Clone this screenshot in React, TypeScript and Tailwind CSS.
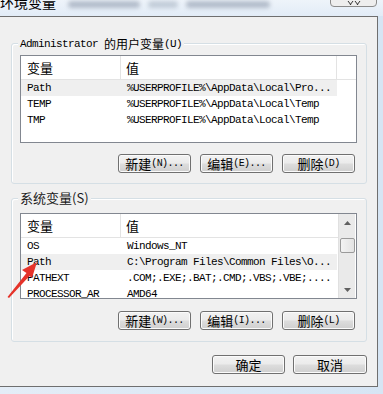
import React from "react";

const mono = "font-['NSimSun','Liberation_Mono','Noto_Sans_CJK_SC',monospace] text-[11px] tracking-[-0.6px] leading-[16px] text-black";
const cjk = "font-['Noto_Sans_CJK_SC','Microsoft_YaHei',sans-serif]";

function Btn({ label, w = "w-[73px]" }: { label: React.ReactNode; w?: string }) {
  return (
    <div
      className={`${w} h-[19px] rounded-[3px] border border-[#707070] bg-[linear-gradient(to_bottom,#f2f2f2_0%,#ebebeb_48%,#dddddd_52%,#cfcfcf_100%)] shadow-[inset_0_0_0_1px_#fbfbfb] flex items-center justify-center text-black`}
    >
      {label}
    </div>
  );
}

function BtnLabel({ cn, hk }: { cn: string; hk: string }) {
  return (
    <span className="flex items-center">
      <span className={`${cjk} text-[13px] leading-[16px]`}>{cn}</span>
      <span className={`font-['Liberation_Mono',monospace] text-[10px] tracking-[-0.6px] leading-[16px]`}>{hk}</span>
    </span>
  );
}

type Row = { k: string; v: string; sel?: boolean };

function Header({ right }: { right: boolean }) {
  return (
    <div className="flex h-[24px] border-b border-[#e3e3e3] shrink-0">
      <div className={`w-[100px] border-r border-[#e3e3e3] pl-[6px] flex items-center ${cjk} text-[13px]`}>变量</div>
      <div className={`w-[216px] ${right ? "border-r border-[#e3e3e3]" : ""} pl-[5px] flex items-center ${cjk} text-[13px]`}>值</div>
    </div>
  );
}

function Rows({ rows }: { rows: Row[] }) {
  return (
    <>
      {rows.map((r) => (
        <div key={r.k} className={`flex h-[16px] shrink-0 w-[316px] ${r.sel ? "bg-[#efefef]" : ""}`}>
          <div className={`w-[100px] pl-[6px] whitespace-nowrap overflow-hidden ${mono}`}>{r.k}</div>
          <div className={`w-[216px] pl-[6px] whitespace-nowrap overflow-hidden ${mono}`}>{r.v}</div>
        </div>
      ))}
    </>
  );
}

export default function App() {
  const userRows: Row[] = [
    { k: "Path", v: "%USERPROFILE%\\AppData\\Local\\Pro...", sel: true },
    { k: "TEMP", v: "%USERPROFILE%\\AppData\\Local\\Temp" },
    { k: "TMP", v: "%USERPROFILE%\\AppData\\Local\\Temp" },
  ];
  const sysRows: Row[] = [
    { k: "OS", v: "Windows_NT" },
    { k: "Path", v: "C:\\Program Files\\Common Files\\O...", sel: true },
    { k: "PATHEXT", v: ".COM;.EXE;.BAT;.CMD;.VBS;.VBE;...." },
    { k: "PROCESSOR_AR", v: "AMD64" },
  ];

  return (
    <div className="relative w-[383px] h-[394px] overflow-hidden bg-[linear-gradient(to_right,#e4edf7,#d6e5f4)]">
      {/* title bar */}
      <div className="h-[16px] flex items-start overflow-hidden bg-[linear-gradient(to_bottom,#eef4fa,#e2ecf7)]">
        <div className={`${cjk} text-[14px] leading-[14px] mt-[-5px] text-black whitespace-nowrap`}>环境变量</div>
        <div className="ml-[12px] mt-[1px] flex gap-[8px] blur-[2px]">
          <div className="w-[72px] h-[7px] bg-[#8e9aab] rounded-full opacity-60" />
          <div className="w-[30px] h-[7px] bg-[#9aa7b8] rounded-full opacity-50" />
          <div className="w-[84px] h-[7px] bg-[#8e9aab] rounded-full opacity-60" />
        </div>
        <div className="ml-auto mr-[6px] w-[47px] h-[8px] mt-[-1px] rounded-b-[4px] border border-[#8b8b8b] bg-[#eeeeee] flex justify-center items-end">
          <svg width="14" height="5" viewBox="0 0 14 5">
            <path d="M1 0 L4 4 M6 0 L3 4 M8 0 L11 4 M13 0 L10 4" stroke="#333" strokeWidth="1" fill="none" />
          </svg>
        </div>
      </div>

      {/* dialog body */}
      <div className="w-[378px] h-[371px] border-t border-r border-b border-[#6f6f6f] bg-[#f0f0f0] pl-[11px] pr-[10px] flex flex-col">
        {/* user vars group */}
        <div className="relative mt-[26px] h-[141px] rounded-[3px] border border-[#d5dfe5] shadow-[inset_1px_1px_0_#fff] pt-[11px] pl-[8px] pr-[9px] flex flex-col shrink-0">
          <div className={`absolute -top-[8px] left-[6px] px-[2px] bg-[#f0f0f0] flex items-center whitespace-pre ${mono} leading-[14px]`}>
            <span>Administrator </span>
            <span className={`${cjk} text-[12px] tracking-normal`}>的用户变量</span>
            <span>(U)</span>
          </div>
          <div className="h-[88px] border border-[#828790] bg-white flex flex-col overflow-hidden shrink-0">
            <Header right />
            <Rows rows={userRows} />
          </div>
          <div className="mt-[11px] flex justify-end gap-[9px] pr-[2px]">
            <Btn label={<BtnLabel cn="新建" hk="(N)..." />} />
            <Btn label={<BtnLabel cn="编辑" hk="(E)..." />} />
            <Btn label={<BtnLabel cn="删除" hk="(D)" />} />
          </div>
        </div>

        {/* system vars group */}
        <div className="relative mt-[14px] h-[144px] rounded-[3px] border border-[#d5dfe5] shadow-[inset_1px_1px_0_#fff] pt-[14px] pl-[8px] pr-[9px] flex flex-col shrink-0">
          <div className={`absolute -top-[9px] left-[6px] px-[2px] bg-[#f0f0f0] ${cjk} text-[13px] leading-[16px] text-[#1a1a1a]`}>
            系统变量(S)
          </div>
          <div className="h-[86px] border border-[#828790] bg-white flex overflow-hidden shrink-0">
            <div className="w-[317px] flex flex-col">
              <Header right={false} />
              <Rows rows={sysRows} />
            </div>
            <div className="w-[17px] bg-[#eaeaea] border-l border-[#e0e0e0] flex flex-col items-center">
              <div className="h-[16px] flex items-center justify-center mt-[1px]">
                <svg width="7" height="4" viewBox="0 0 7 4"><path d="M0 4 L3.5 0 L7 4 Z" fill="#606060" /></svg>
              </div>
              <div className="mt-[7px] w-[15px] h-[15px] rounded-[2px] border border-[#9a9a9a] bg-[linear-gradient(to_right,#f3f3f3,#e3e3e3)]" />
              <div className="mt-auto h-[16px] flex items-center justify-center">
                <svg width="7" height="4" viewBox="0 0 7 4"><path d="M0 0 L3.5 4 L7 0 Z" fill="#606060" /></svg>
              </div>
            </div>
          </div>
          <div className="mt-[12px] flex justify-end gap-[9px] pr-[2px]">
            <Btn label={<BtnLabel cn="新建" hk="(W)..." />} />
            <Btn label={<BtnLabel cn="编辑" hk="(I)..." />} />
            <Btn label={<BtnLabel cn="删除" hk="(L)" />} />
          </div>
        </div>

        {/* OK / Cancel */}
        <div className="mt-[13px] flex justify-end gap-[8px]">
          <Btn label={<span className={`${cjk} text-[13px]`}>确定</span>} />
          <Btn w="w-[74px]" label={<span className={`${cjk} text-[13px]`}>取消</span>} />
        </div>
      </div>

      {/* red annotation arrow */}
      <svg className="absolute left-0 top-0 pointer-events-none" width="383" height="394" viewBox="0 0 383 394">
        <polygon points="37,262 22,270 26.5,273 7.5,297 9,298 29.5,276 32,278" fill="#e5332a" />
      </svg>
    </div>
  );
}
